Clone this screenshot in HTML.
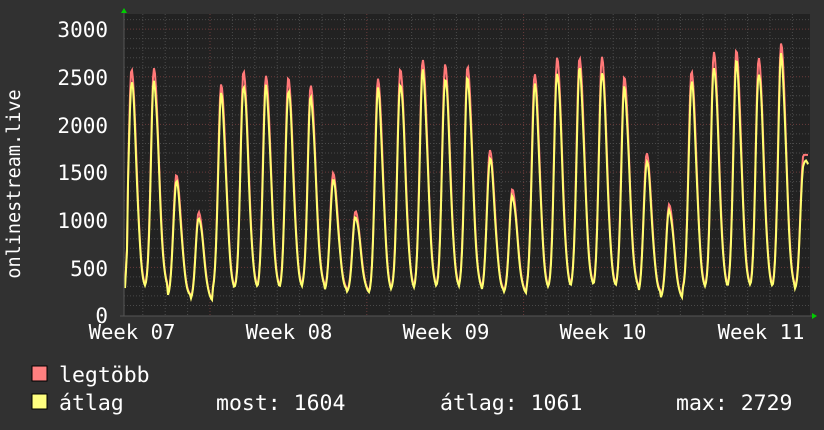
<!DOCTYPE html>
<html><head><meta charset="utf-8"><style>
html,body{margin:0;padding:0;background:#303030;}
body{width:824px;height:430px;overflow:hidden;position:relative;font-family:"DejaVu Sans Mono","Liberation Mono",monospace;color:#fff;}
</style></head><body>
<svg id="g" width="824" height="430" style="position:absolute;left:0;top:0" xmlns="http://www.w3.org/2000/svg">
<rect x="0" y="0" width="824" height="430" fill="#313131"/>
<rect x="124" y="14" width="686" height="302" fill="#222"/>
<g id="grid"></g>
<polyline id="mx" fill="none" stroke="#ff7878" stroke-width="2"/>
<polyline id="av" fill="none" stroke="#ffff70" stroke-width="2"/>
<line x1="124" y1="10" x2="124" y2="316" stroke="#555" stroke-width="1"/>
<line x1="120" y1="316" x2="812" y2="316" stroke="#555" stroke-width="1"/>
<polygon points="121,13 127,13 124,8" fill="#0c0"/>
<polygon points="812,313 812,319 817,316" fill="#0c0"/>
<g font-family="DejaVu Sans Mono, Liberation Mono, monospace" font-size="21" fill="#fff" text-anchor="end">
<text x="108" y="37">3000</text><text x="108" y="85">2500</text><text x="108" y="133">2000</text>
<text x="108" y="180">1500</text><text x="108" y="228">1000</text><text x="108" y="276">500</text>
<text x="108" y="323">0</text>
</g>
<g font-family="DejaVu Sans Mono, Liberation Mono, monospace" font-size="20.6" fill="#fff" text-anchor="middle">
<text x="132" y="339">Week 07</text><text x="289" y="339">Week 08</text><text x="446" y="339">Week 09</text>
<text x="603" y="339">Week 10</text><text x="761" y="339">Week 11</text>
</g>
<text x="0" y="0" transform="translate(20,184) rotate(-90)" text-anchor="middle" font-family="DejaVu Sans Mono, Liberation Mono, monospace" font-size="18.5" fill="#fff">onlinestream.live</text>
<rect x="32" y="366" width="15" height="15" fill="#ff8080" stroke="#000"/>
<rect x="32" y="394" width="15" height="15" fill="#ffff80" stroke="#000"/>
<g font-family="DejaVu Sans Mono, Liberation Mono, monospace" font-size="21.5" fill="#fff">
<text x="59" y="382">legtöbb</text>
<text x="59" y="410">átlag</text>
<text x="216" y="410">most: 1604</text>
<text x="440" y="410">átlag: 1061</text>
<text x="676" y="410">max: 2729</text>
</g>
</svg>
<script>
var g=document.getElementById('grid'),s='';
function Y(v){return 315-v*0.0953;}
for(var v=100;v<=3100;v+=100){var y=Y(v).toFixed(1);var maj=v%500==0;
s+='<line x1="124" x2="810" y1="'+y+'" y2="'+y+'" stroke="'+(maj?'#6a3b3b':'#4a4a4a')+'" stroke-dasharray="1,2"/>';}
for(var k=-4;k<30;k++){var x=210+22.4*k;if(x<126||x>810)continue;
var wk=[210,367,524,682].some(function(w){return Math.abs(w-x)<1});
s+='<line y1="14" y2="316" x1="'+x.toFixed(1)+'" x2="'+x.toFixed(1)+'" stroke="'+(wk?'#6a3b3b':'#4a4a4a')+'" stroke-dasharray="1,2"/>';}
g.innerHTML=s;
var P=[2580,2590,1470,1080,2420,2560,2510,2490,2410,1490,1090,2480,2580,2680,2630,2610,1730,1320,2530,2700,2700,2710,2500,1700,1160,2560,2760,2780,2700,2850,1680];
var B=[280,290,200,150,250,280,270,280,300,260,240,230,270,270,290,280,250,230,260,280,300,290,290,230,170,270,280,290,280,280,270];
var m=[],a=[];
for(var x=125;x<=808;x++){var v=0,best=0;
for(var i=0;i<P.length;i++){var p=131.5+22.4*i;var t=x-p;var f=t<0?Math.exp(-Math.pow(t/4.2,2)):Math.exp(-Math.pow(t/6.8,2));
var val=B[i]+(P[i]-B[i])*f;if(f>best){best=f;v=val;}
if(i==P.length-1&&t>0){v=P[i];}}
if(x<128)v=300+(x-125)*200;
var w=v*(0.95+0.015*Math.sin(x));
m.push(x+','+Y(v).toFixed(1));a.push(x+','+Y(w).toFixed(1));}
document.getElementById('mx').setAttribute('points',m.join(' '));
document.getElementById('av').setAttribute('points',a.join(' '));
</script>
</body></html>
